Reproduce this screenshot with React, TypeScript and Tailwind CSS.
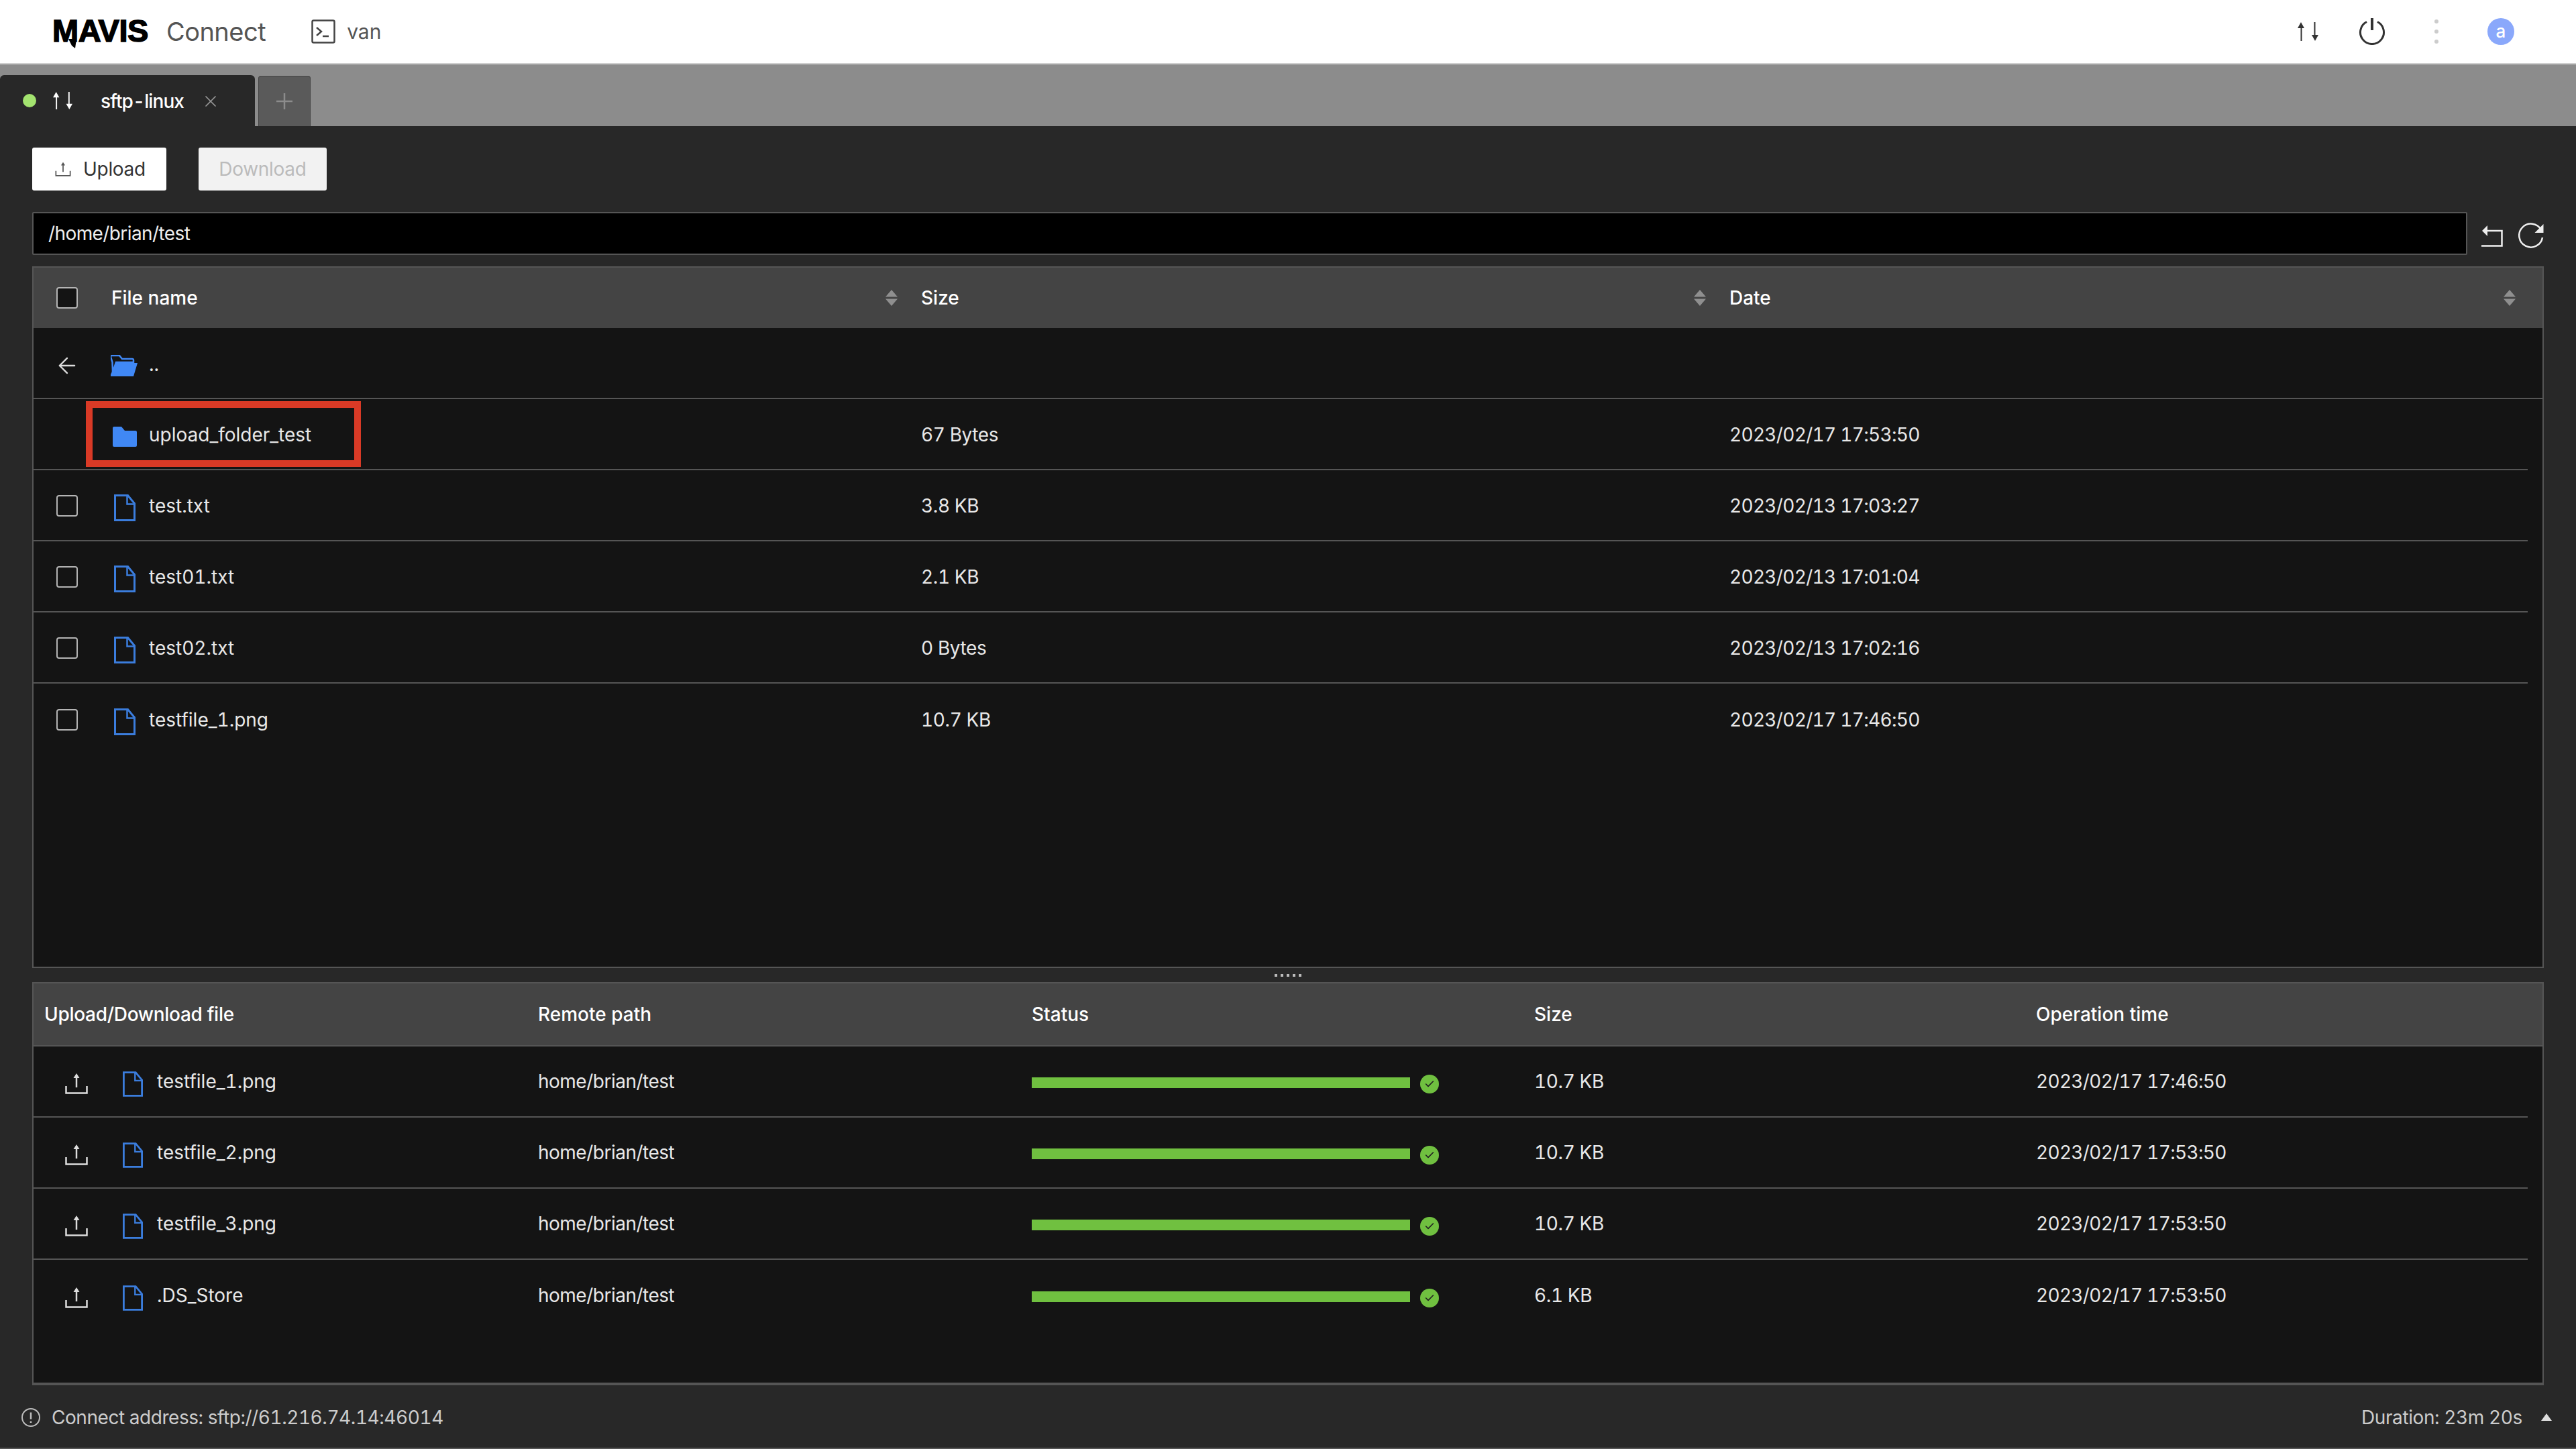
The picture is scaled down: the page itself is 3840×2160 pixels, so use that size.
import { ArrowLeft, Check, X } from "lucide-react";

const files = [
  { name: "test.txt", size: "3.8 KB", date: "2023/02/13 17:03:27" },
  { name: "test01.txt", size: "2.1 KB", date: "2023/02/13 17:01:04" },
  { name: "test02.txt", size: "0 Bytes", date: "2023/02/13 17:02:16" },
  { name: "testfile_1.png", size: "10.7 KB", date: "2023/02/17 17:46:50" },
];

const transfers = [
  { name: "testfile_1.png", size: "10.7 KB", time: "2023/02/17 17:46:50" },
  { name: "testfile_2.png", size: "10.7 KB", time: "2023/02/17 17:53:50" },
  { name: "testfile_3.png", size: "10.7 KB", time: "2023/02/17 17:53:50" },
  { name: ".DS_Store", size: "6.1 KB", time: "2023/02/17 17:53:50" },
];

function UpDownIcon({ className }: { className: string }) {
  return (
    <svg viewBox="0 0 33 30" className={className} fill="currentColor">
      <path d="M5.5 10H1L6 1l5 9H7.5v19h-2z" />
      <path d="M25.5 1h2v19H32l-5 9-5-9h3.5z" />
    </svg>
  );
}

function UploadIcon({ className }: { className: string }) {
  return (
    <svg viewBox="0 0 34 32" className={className} fill="none" stroke="currentColor" strokeWidth="2.5">
      <path d="M17 22V5" />
      <path d="M12.5 8 17 1l4.5 7z" fill="currentColor" stroke="none" />
      <path d="M1.5 20v10.5h31V20" />
    </svg>
  );
}

function FileIcon({ className }: { className: string }) {
  return (
    <svg viewBox="0 0 32 40" className={className} fill="none" stroke="#3b7ddd" strokeWidth="3">
      <path d="M1.5 1.5h19l10 12v25h-29z" />
      <path d="M19.5 1.5v13h11" strokeWidth="2.5" />
    </svg>
  );
}

function SortIcon() {
  return (
    <svg viewBox="0 0 18 24" className="h-[24px] w-[18px] shrink-0" fill="#8f8f8f">
      <path d="M9 0l9 10.500H0z" />
      <path d="M0 13.500h18L9 24z" />
    </svg>
  );
}

function Checkbox() {
  return <div className="h-[32px] w-[32px] rounded-[4px] border-2 border-[#b5b5b5] bg-[#141414]" />;
}

export default function App() {
  return (
    <div className="flex h-[2160px] w-[3840px] flex-col overflow-hidden bg-[#282828] font-['Inter',sans-serif] text-[28px] tabular-nums text-[#e8e8e8]">
      {/* top bar */}
      <header className="flex h-[96px] shrink-0 items-center border-b-2 border-[#cfcfcf] bg-white pl-[78px] pr-[92px]">
        <div className="relative">
          <span className="font-['Liberation_Sans',sans-serif] text-[47px] font-bold leading-none tracking-[-0.500px] text-black [-webkit-text-stroke:1.5px_black]">
            MAVIS
          </span>
          <svg viewBox="0 0 12 14" className="absolute left-[24px] top-[36px] h-[14px] w-[12px]" fill="black">
            <path d="M0 0h12l-2 14-5-4z" />
          </svg>
        </div>
        <span className="ml-[27px] text-[38px] font-normal leading-none tracking-[-0.5px] text-[#555]">Connect</span>
        <svg viewBox="0 0 36 36" className="ml-[68px] h-[36px] w-[36px]" fill="none" stroke="#444" strokeWidth="2.5">
          <rect x="1.500" y="1.500" width="33" height="33" rx="2" />
          <path d="M8 12l7 6-7 6M17 25h9" />
        </svg>
        <span className="ml-[17px] text-[30px] leading-none text-[#555]">van</span>
        <UpDownIcon className="ml-auto h-[30px] w-[33px] text-[#333]" />
        <svg viewBox="0 0 40 40" className="ml-[59px] h-[40px] w-[40px]" fill="none" stroke="#333" strokeWidth="3">
          <path d="M12 5.500a17.500 17.500 0 1 0 16 0" />
          <path d="M20 0v18" strokeWidth="4" />
        </svg>
        <div className="ml-[73px] flex flex-col gap-[9px]">
          <div className="h-[6px] w-[6px] rounded-full bg-[#ccc]" />
          <div className="h-[6px] w-[6px] rounded-full bg-[#ccc]" />
          <div className="h-[6px] w-[6px] rounded-full bg-[#ccc]" />
        </div>
        <div className="ml-[73px] flex h-[40px] w-[40px] items-center justify-center rounded-full bg-[#8aa8fb] text-[26px] font-medium leading-none text-white">
          a
        </div>
      </header>

      {/* tab strip */}
      <div className="flex h-[92px] shrink-0 items-end bg-[#8c8c8c]">
        <div className="flex h-[76px] w-[380px] items-center rounded-t-[6px] bg-[#282828] pl-[34px]">
          <div className="h-[20px] w-[20px] rounded-full bg-[#a3e36f]" />
          <UpDownIcon className="ml-[23px] h-[28px] w-[33px] text-white" />
          <span className="ml-[40px] mt-[2px] font-medium leading-none tracking-[-0.900px] text-white">sftp-linux</span>
          <X className="ml-[26px] mt-[2px] h-[28px] w-[28px] text-[#999]" strokeWidth={1.500} />
        </div>
        <div className="ml-[5px] flex h-[75px] w-[78px] items-center justify-center rounded-t-[4px] border border-b-0 border-[#444] bg-[#5a5a5a] text-[#8c8c8c]">
          <svg viewBox="0 0 24 24" className="h-[24px] w-[24px]" stroke="currentColor" strokeWidth="2.500">
            <path d="M12 0v24M0 12h24" />
          </svg>
        </div>
      </div>

      {/* main */}
      <main className="flex min-h-0 flex-1 flex-col px-[48px] pt-[32px]">
        <div className="flex h-[64px] shrink-0 gap-[48px]">
          <button className="flex w-[200px] items-center rounded-[3px] bg-white pl-[34px] text-[#333]">
            <UploadIcon className="h-[22px] w-[24px] text-[#555]" />
            <span className="ml-[18px] tracking-[-0.300px]">Upload</span>
          </button>
          <button className="flex w-[191px] items-center justify-center rounded-[3px] bg-[#f2f2f2] tracking-[-0.300px] text-[#bbb]">
            Download
          </button>
        </div>

        <div className="mt-[32px] flex h-[64px] shrink-0 items-center">
          <div className="flex h-full flex-1 items-center rounded-[2px] border-2 border-[#555] bg-black pl-[22px] tracking-[-0.600px] text-[#eee]">
            /home/brian/test
          </div>
          <svg viewBox="0 0 32 34" className="ml-[21px] mt-[6px] h-[34px] w-[32px]" fill="none" stroke="#eee" strokeWidth="2.500">
            <path d="M5 10h25.500v22.500H0" />
            <path d="M9 2v16L1 10z" fill="#eee" stroke="none" />
          </svg>
          <svg viewBox="0 0 38 38" className="ml-[23px] mt-[6px] h-[38px] w-[38px]" fill="none" stroke="#eee" strokeWidth="2.500">
            <path d="M34 10.500A17.500 17.500 0 1 0 36 22" />
            <path d="M37.500 2v13h-13z" fill="#eee" stroke="none" />
          </svg>
        </div>

        {/* file list */}
        <section className="mt-[17px] h-[1046px] shrink-0 border-2 border-[#555] bg-[#141414]">
          <div className="grid h-[90px] grid-cols-[115px_1208px_1205px_1fr] items-center bg-[#444] font-medium text-white">
            <div className="flex justify-center pr-[16px]">
              <Checkbox />
            </div>
            <div className="flex items-center justify-between pl-[1px] pr-[35px]">
              File name
              <SortIcon />
            </div>
            <div className="flex items-center justify-between pr-[35px]">
              Size
              <SortIcon />
            </div>
            <div className="flex items-center justify-between pr-[40px]">
              Date
              <SortIcon />
            </div>
          </div>

          <div className="grid h-[106px] grid-cols-[115px_1fr] items-center border-b-2 border-[#555] pt-[2px]">
            <div className="flex justify-center pr-[16px]">
              <ArrowLeft className="mt-[6px] h-[38px] w-[38px] text-[#ddd]" strokeWidth={1.500} />
            </div>
            <div className="flex items-center">
              <svg viewBox="0 0 40 32" className="mt-[6px] h-[32px] w-[40px]" fill="#4088f5">
                <path d="M0 3a2 2 0 0 1 2-2h11l4 5h15a2 2 0 0 1 2 2v3H8L3 26 2.500 11h0z" fill="none" stroke="#4088f5" strokeWidth="2.500" />
                <path d="M8 12h32l-6 20H0v-3z" />
              </svg>
              <span className="ml-[17px] mt-[2px]">..</span>
            </div>
          </div>

          <div className="relative mr-[22px] grid h-[106px] grid-cols-[115px_1208px_1205px_1fr] items-center border-b-2 border-[#555] pt-[2px]">
            <div />
            <div className="flex items-center">
              <svg viewBox="0 0 36 30" className="ml-[3px] mt-[6px] h-[30px] w-[36px]" fill="#4088f5">
                <path d="M0 2a2 2 0 0 1 2-2h11l5 6h16a2 2 0 0 1 2 2v20a2 2 0 0 1-2 2H2a2 2 0 0 1-2-2z" />
              </svg>
              <span className="ml-[18px]">upload_folder_test</span>
            </div>
            <div className="tracking-[-0.400px]">67 Bytes</div>
            <div className="tracking-[-0.700px]">2023/02/17 17:53:50</div>
            <div className="absolute left-[78px] top-[3px] h-[98px] w-[410px] border-[10px] border-[#d93a26]" />
          </div>

          {files.map((f, i) => (
            <div
              key={f.name}
              className={
                i < files.length - 1
                  ? "mr-[22px] grid h-[106px] grid-cols-[115px_1208px_1205px_1fr] items-center border-b-2 border-[#555] pt-[2px]"
                  : "mr-[22px] grid h-[106px] grid-cols-[115px_1208px_1205px_1fr] items-center pt-[2px]"
              }
            >
              <div className="flex justify-center pr-[16px]">
                <Checkbox />
              </div>
              <div className="flex items-center">
                <FileIcon className="ml-[5px] mt-[6px] h-[40px] w-[32px]" />
                <span className="ml-[20px]">{f.name}</span>
              </div>
              <div className="tracking-[-0.400px]">{f.size}</div>
              <div className="tracking-[-0.700px]">{f.date}</div>
            </div>
          ))}
        </section>

        {/* resize handle */}
        <div className="flex h-[21px] shrink-0 items-center justify-center gap-[5px]">
          <div className="h-[4px] w-[4px] bg-[#bbb]" />
          <div className="h-[4px] w-[4px] bg-[#bbb]" />
          <div className="h-[4px] w-[4px] bg-[#bbb]" />
          <div className="h-[4px] w-[4px] bg-[#bbb]" />
          <div className="h-[4px] w-[4px] bg-[#bbb]" />
        </div>

        {/* transfer list */}
        <section className="min-h-0 flex-1 border-2 border-b-4 border-[#555] bg-[#141414]">
          <div className="grid h-[94px] grid-cols-[752px_736px_749px_748px_1fr] items-center border-b-2 border-[#555] bg-[#444] font-medium text-white">
            <div className="pl-[16px] tracking-[-0.300px]">Upload/Download file</div>
            <div>Remote path</div>
            <div>Status</div>
            <div>Size</div>
            <div>Operation time</div>
          </div>
          {transfers.map((t, i) => (
            <div
              key={t.name}
              className={
                i < transfers.length - 1
                  ? "mr-[22px] grid h-[106px] grid-cols-[752px_736px_749px_748px_1fr] items-center border-b-2 border-[#555]"
                  : "mr-[22px] grid h-[106px] grid-cols-[752px_736px_749px_748px_1fr] items-center"
              }
            >
              <div className="flex items-center pl-[47px]">
                <UploadIcon className="mt-[6px] h-[32px] w-[34px] text-[#ddd]" />
                <FileIcon className="ml-[52px] mt-[8px] h-[40px] w-[30px]" />
                <span className="ml-[21px]">{t.name}</span>
              </div>
              <div className="tracking-[-0.500px]">home/brian/test</div>
              <div className="flex items-center">
                <div className="mt-[4px] h-[16px] w-[564px] bg-[#70c040]" />
                <div className="ml-[15px] mt-[8px] flex h-[28px] w-[28px] items-center justify-center rounded-full bg-[#70c040]">
                  <Check className="h-[16px] w-[16px] text-[#222]" strokeWidth={2.500} />
                </div>
              </div>
              <div className="tracking-[-0.400px]">{t.size}</div>
              <div className="tracking-[-0.700px]">{t.time}</div>
            </div>
          ))}
        </section>
      </main>

      {/* status bar */}
      <footer className="flex h-[95px] shrink-0 items-center border-b-2 border-[#555] pl-[32px] pr-[36px] pt-[2px] text-[#ccc]">
        <svg viewBox="0 0 28 28" className="h-[28px] w-[28px]" fill="none" stroke="#bbb" strokeWidth="2">
          <circle cx="14" cy="14" r="13" />
          <path d="M14 6.500v10M14 19.500v2.500" strokeWidth="2.500" />
        </svg>
        <span className="ml-[17px] tracking-[-0.450px]">Connect address: sftp://61.216.74.14:46014</span>
        <span className="ml-auto tracking-[-0.400px]">Duration: 23m 20s</span>
        <svg viewBox="0 0 16 11" className="ml-[28px] h-[11px] w-[16px]" fill="#ddd">
          <path d="M8 0l8 11H0z" />
        </svg>
      </footer>
    </div>
  );
}
